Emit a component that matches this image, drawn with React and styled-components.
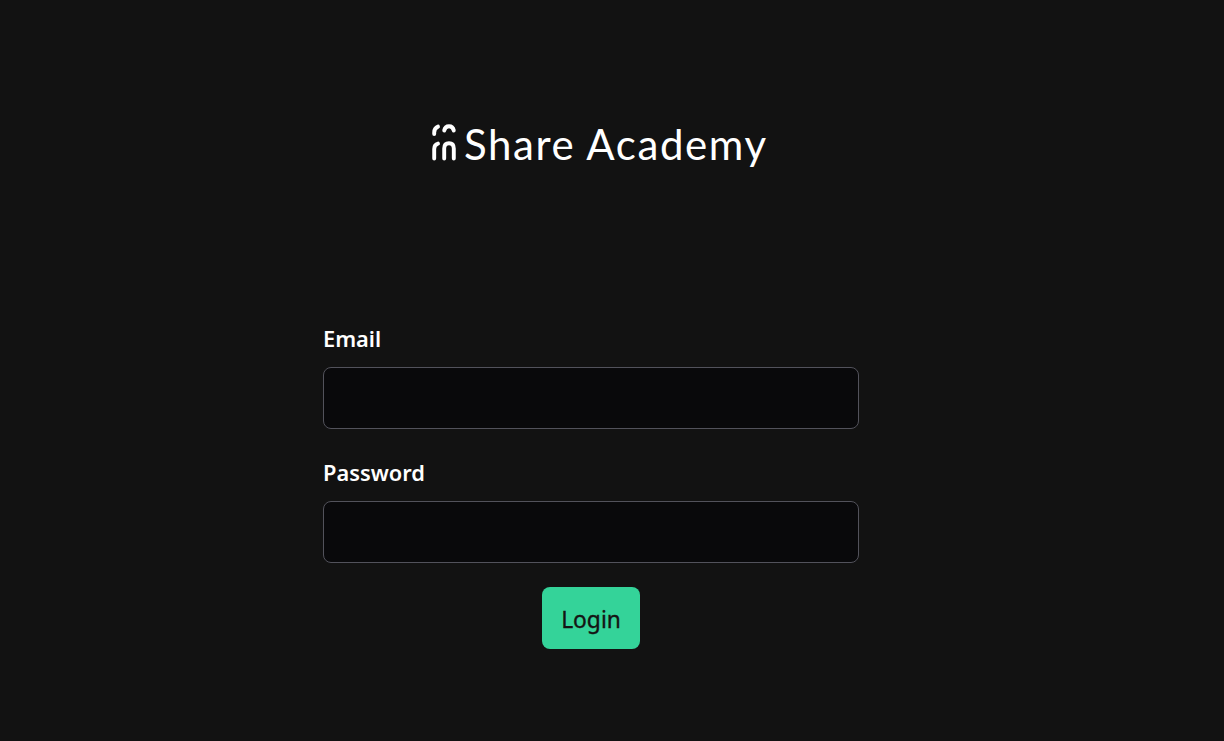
import styled, { createGlobalStyle } from "styled-components";

const GlobalStyle = createGlobalStyle`
  html, body {
    margin: 0;
    background: #121212;
  }
  body {
    font-family: "Noto Sans", "Open Sans", sans-serif;
  }
`;

export default function App() {
  return (
    <>
      <GlobalStyle />
      <Page>
        <Logo>
          <LogoMark />
          <LogoText>Share Academy</LogoText>
        </Logo>
        <Form>
          <Field>
            <Label htmlFor="email">Email</Label>
            <Input id="email" type="email" />
          </Field>
          <Field>
            <Label htmlFor="password">Password</Label>
            <Input id="password" type="password" />
          </Field>
          <Submit type="button">Login</Submit>
        </Form>
      </Page>
    </>
  );
}

function LogoMark() {
  return (
    <Mark viewBox="0 0 25 37" fill="none" stroke="#fff" strokeWidth="3.9" strokeLinecap="round">
      <path d="M2.2 10V8.5C2.2 6 3.5 3.6 6 2.6" />
      <path d="M12.2 6.5C12.8 3.6 14.6 2.2 17 2.2C19.4 2.2 21.2 3.6 21.8 6.5" />
      <path d="M2.2 34.5V25C2.2 22 3.5 20.2 6 19.6" />
      <path d="M12.2 34.5V24.5C12.2 21 14 19.2 17 19.2C20 19.2 21.8 21 21.8 24.5V34.5" />
    </Mark>
  );
}

const Page = styled.main`
  display: flex;
  flex-direction: column;
  align-items: flex-start;
  width: 100%;
  min-height: 741px;
  padding: 118px 0 0 323px;
  box-sizing: border-box;
  color: #fff;
`;

const Logo = styled.div`
  display: flex;
  align-items: center;
  gap: 7px;
  height: 52px;
  margin-left: 109px;
`;

const Mark = styled.svg`
  width: 25px;
  height: 37px;
  margin-top: -4px;
`;

const LogoText = styled.span`
  font-family: "Lato", sans-serif;
  font-size: 42px;
  font-weight: 400;
  line-height: 52px;
  letter-spacing: 1.6px;
  white-space: nowrap;
`;

const Form = styled.form`
  display: flex;
  flex-direction: column;
  align-items: center;
  gap: 24px;
  width: 536px;
  margin-top: 149px;
`;

const Field = styled.div`
  display: flex;
  flex-direction: column;
  gap: 8px;
  width: 100%;
`;

const Label = styled.label`
  font-size: 21.8px;
  font-weight: 600;
  line-height: 40px;
`;

const Input = styled.input`
  display: block;
  width: 100%;
  height: 62px;
  box-sizing: border-box;
  background: #09090b;
  border: 1px solid #52525b;
  border-radius: 8px;
  color: #fff;
`;

const Submit = styled.button`
  width: 98px;
  height: 62px;
  padding: 2px 0 0;
  border: none;
  border-radius: 8px;
  background: #34d399;
  color: #141414;
  font-family: inherit;
  font-size: 22.8px;
  font-weight: 400;
  -webkit-text-stroke: 0.35px #141414;
`;
